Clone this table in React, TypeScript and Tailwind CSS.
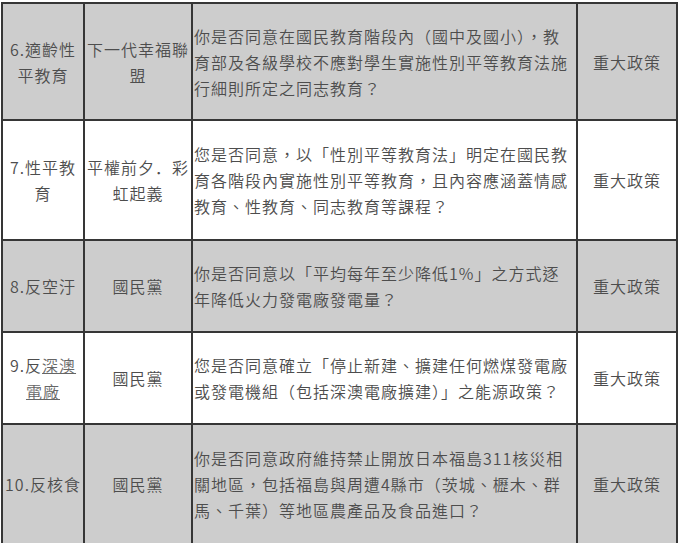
const rows = [
  {
    bg: 'bg-[#cdcdcd]',
    h: 'h-[117px]',
    topic: ['6.適齡性', '平教育'],
    by: ['下一代幸福聯', '盟'],
    question: [
      '你是否同意在國民教育階段內（國中及國小），教',
      '育部及各級學校不應對學生實施性別平等教育法施',
      '行細則所定之同志教育？',
    ],
  },
  {
    bg: 'bg-white',
    h: 'h-[120px]',
    topic: ['7.性平教', '育'],
    by: null,
    question: [
      '您是否同意，以「性別平等教育法」明定在國民教',
      '育各階段內實施性別平等教育，且內容應涵蓋情感',
      '教育、性教育、同志教育等課程？',
    ],
  },
  {
    bg: 'bg-[#cdcdcd]',
    h: 'h-[92px]',
    topic: ['8.反空汙'],
    by: ['國民黨'],
    question: ['你是否同意以「平均每年至少降低1%」之方式逐', '年降低火力發電廠發電量？'],
  },
  {
    bg: 'bg-white',
    h: 'h-[92px]',
    topic: null,
    by: ['國民黨'],
    question: ['您是否同意確立「停止新建、擴建任何燃煤發電廠', '或發電機組（包括深澳電廠擴建）」之能源政策？'],
  },
  {
    bg: 'bg-[#cdcdcd]',
    h: 'h-[120px]',
    topic: ['10.反核食'],
    by: ['國民黨'],
    question: [
      '你是否同意政府維持禁止開放日本福島311核災相',
      '關地區，包括福島與周遭4縣市（茨城、櫪木、群',
      '馬、千葉）等地區農產品及食品進口？',
    ],
  },
];

function Lines({ lines }: { lines: string[] }) {
  return (
    <>
      {lines.map((l, i) => (
        <div key={i} className="whitespace-nowrap">
          {l}
        </div>
      ))}
    </>
  );
}

export default function App() {
  return (
    <div
      className="w-[679px] h-[543px] overflow-hidden bg-white pt-[2px] pl-px text-[16px] leading-[26px] tracking-[1px] text-[#4d4d4d] font-[350]"
      style={{ fontFamily: '"Noto Sans CJK TC", "Noto Sans", sans-serif' }}
    >
      <table className="w-[677px] table-fixed border-collapse">
        <colgroup>
          <col className="w-[82px]" />
          <col className="w-[108px]" />
          <col className="w-[385px]" />
          <col className="w-[100px]" />
        </colgroup>
        <tbody>
          {rows.map((r, i) => (
            <tr key={i} className={`${r.bg} ${r.h}`}>
              <td className="border-2 border-[#363636] text-center align-middle p-0">
                {r.topic ? (
                  <Lines lines={r.topic} />
                ) : (
                  <>
                    <div>
                      9.反<a href="#" className="underline text-[#666]">深澳</a>
                    </div>
                    <div>
                      <a href="#" className="underline text-[#666]">電廠</a>
                    </div>
                  </>
                )}
              </td>
              <td className="border-2 border-[#363636] text-center align-middle p-0">
                {r.by ? (
                  <Lines lines={r.by} />
                ) : (
                  <>
                    <div className="whitespace-nowrap">
                      平權前夕
                      <span style={{ fontFamily: '"Noto Sans CJK JP", sans-serif' }}>．</span>彩
                    </div>
                    <div>虹起義</div>
                  </>
                )}
              </td>
              <td className="border-2 border-[#363636] text-left align-middle pl-[1px] pr-0 py-0">
                <Lines lines={r.question} />
              </td>
              <td className="border-2 border-[#363636] text-center align-middle p-0">重大政策</td>
            </tr>
          ))}
        </tbody>
      </table>
    </div>
  );
}
